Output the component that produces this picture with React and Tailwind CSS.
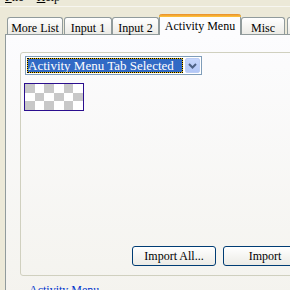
import React from 'react';

const tabs = [
  { label: 'More List', w: 'w-[56px]', ml: 'ml-[7px]' },
  { label: 'Input 1', w: 'w-[48px]', ml: 'ml-[1px]' },
  { label: 'Input 2', w: 'w-[47px]', ml: 'ml-0' },
  { label: 'Activity Menu', w: 'w-[82px]', ml: 'ml-0', selected: true },
  { label: 'Misc', w: 'w-[44px]', ml: 'ml-0' },
  { label: '', w: 'w-[40px]', ml: 'ml-[2px]' },
];

const Checker = () => {
  const cells = [];
  for (let r = 0; r < 3; r++) {
    for (let c = 0; c < 6; c++) {
      cells.push(
        <div key={`${r}-${c}`} className={(r + c) % 2 === 0 ? 'bg-[#c8c8c8]' : 'bg-white'}></div>
      );
    }
  }
  return (
    <div className="ml-[3px] mt-[8px] w-[60px] h-[28px] border border-[#2b0f8f] grid grid-cols-6 grid-rows-3">
      {cells}
    </div>
  );
};

const App = () => {
  return (
    <div className="w-[290px] h-[290px] overflow-hidden bg-[#ece9d8] flex flex-col text-black font-['Liberation_Serif',serif]">
      {/* Menu bar, cut off at the top */}
      <div className="h-[7px] overflow-hidden border-b border-[#f7f6f0] shrink-0">
        <div className="flex gap-[13px] pl-[5px] -mt-[10px] text-[12px] leading-[14px]">
          <span><span className="underline">F</span>ile</span>
          <span><span className="underline">H</span>elp</span>
        </div>
      </div>

      {/* Tab strip */}
      <div className="mt-[7px] h-[20px] flex items-end shrink-0 relative z-10">
        {tabs.map((t, i) =>
          t.selected ? (
            <div
              key={i}
              className={`${t.w} ${t.ml} shrink-0 h-[21px] -mb-px bg-[#fcfcfe] border-x border-[#919b9c] rounded-t-[3px] flex flex-col`}
            >
              <div className="h-[3px] rounded-t-[3px] bg-gradient-to-b from-[#e68b2c] to-[#ffc73c] -mx-px"></div>
              <div className="text-[12px] leading-[14px] text-center pt-[2px] whitespace-nowrap">{t.label}</div>
            </div>
          ) : (
            <div
              key={i}
              className={`${t.w} ${t.ml} shrink-0 h-[17px] border-t border-x border-[#919b9c] rounded-t-[3px] bg-gradient-to-b from-white to-[#ecebe6] text-[12px] leading-[14px] text-center pt-[3px] whitespace-nowrap`}
            >
              {t.label}
            </div>
          )
        )}
      </div>

      {/* Tab page */}
      <div className="ml-[5px] flex-1 border-l border-t border-[#919b9c] bg-gradient-to-b from-[#fcfcfe] to-[#f4f3ee] flex flex-col">
        <div className="ml-[14px] mt-[17px] w-[300px] h-[224px] shrink-0 border border-[#d0d0bf] rounded-[3px] flex flex-col">
          {/* Dropdown */}
          <div className="ml-[4px] mt-[3px] w-[177px] h-[19px] border border-[#7f9db9] bg-white flex items-center p-px">
            <div className="w-[156px] h-[15px] bg-[#f0c000]">
              <div className="w-full h-full border border-dotted border-black bg-[#316ac5] bg-clip-padding text-white text-[13px] leading-[13px] whitespace-nowrap overflow-hidden">
                Activity Menu Tab Selected
              </div>
            </div>
            <div className="ml-[2px] w-[15px] h-[15px] rounded-[2px] bg-gradient-to-b from-[#c6d6fc] to-[#b2c7f7] border border-[#bccdf5] flex items-center justify-center">
              <svg width="9" height="6" viewBox="0 0 9 6">
                <path d="M1 1 L4.5 4.5 L8 1" fill="none" stroke="#4d6185" strokeWidth="2" />
              </svg>
            </div>
          </div>

          <Checker />

          <div className="mt-auto mb-[9px] ml-[111px] flex gap-[7px]">
            <button className="w-[84px] h-[20px] shrink-0 border border-[#003c74] rounded-[3px] bg-gradient-to-b from-white to-[#ecebe6] text-[12px] leading-[14px]">
              Import All...
            </button>
            <button className="w-[84px] h-[20px] shrink-0 border border-[#003c74] rounded-[3px] bg-gradient-to-b from-white to-[#ecebe6] text-[12px] leading-[14px]">
              Import
            </button>
          </div>
        </div>

        <div className="ml-[23px] mt-[7px] text-[12px] leading-[14px] text-[#0033cc] whitespace-nowrap">
          Activity Menu
        </div>
      </div>
    </div>
  );
};

export default App;
